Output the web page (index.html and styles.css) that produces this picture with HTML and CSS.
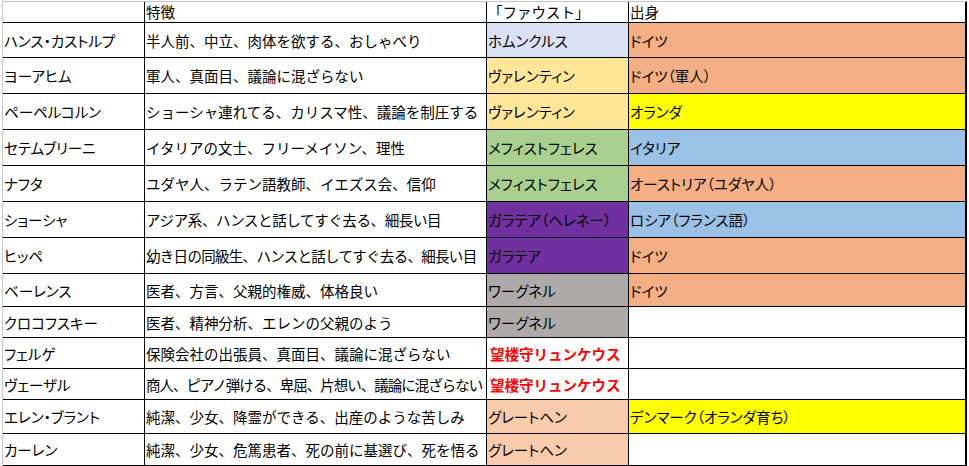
FILE: index.html
```html
<!DOCTYPE html>
<html lang="ja">
<head>
<meta charset="utf-8">
<title>魔の山とファウスト</title>
<link rel="stylesheet" href="styles.css">
</head>
<body>
<div class="sheet">
  <div class="c hdr"></div>
  <div class="c hdr">特徴</div>
  <div class="c hdr">「ファウスト」</div>
  <div class="c hdr">出身</div>

  <div class="c name">ハンス・カストルプ</div>
  <div class="c">半人前、中立、肉体を欲する、おしゃべり</div>
  <div class="c kana lav">ホムンクルス</div>
  <div class="c kana orange">ドイツ</div>

  <div class="c name">ヨーアヒム</div>
  <div class="c">軍人、真面目、議論に混ざらない</div>
  <div class="c kana gold">ヴァレンティン</div>
  <div class="c kana orange">ドイツ（軍人）</div>

  <div class="c name">ペーペルコルン</div>
  <div class="c">ショーシャ連れてる、カリスマ性、議論を制圧する</div>
  <div class="c kana gold">ヴァレンティン</div>
  <div class="c kana yellow">オランダ</div>

  <div class="c name">セテムブリーニ</div>
  <div class="c">イタリアの文士、フリーメイソン、理性</div>
  <div class="c kana green">メフィストフェレス</div>
  <div class="c kana blue">イタリア</div>

  <div class="c name">ナフタ</div>
  <div class="c">ユダヤ人、ラテン語教師、イエズス会、信仰</div>
  <div class="c kana green">メフィストフェレス</div>
  <div class="c kana orange">オーストリア（ユダヤ人）</div>

  <div class="c name">ショーシャ</div>
  <div class="c snug">アジア系、ハンスと話してすぐ去る、細長い目</div>
  <div class="c kana purple">ガラテア（ヘレネー）</div>
  <div class="c kana blue">ロシア（フランス語）</div>

  <div class="c name">ヒッペ</div>
  <div class="c tight">幼き日の同級生、ハンスと話してすぐ去る、細長い目</div>
  <div class="c kana purple">ガラテア</div>
  <div class="c kana orange">ドイツ</div>

  <div class="c name">ベーレンス</div>
  <div class="c">医者、方言、父親的権威、体格良い</div>
  <div class="c kana gray">ワーグネル</div>
  <div class="c kana orange">ドイツ</div>

  <div class="c name">クロコフスキー</div>
  <div class="c">医者、精神分析、エレンの父親のよう</div>
  <div class="c kana gray">ワーグネル</div>
  <div class="c"></div>

  <div class="c name">フェルゲ</div>
  <div class="c">保険会社の出張員、真面目、議論に混ざらない</div>
  <div class="c red">望楼守リュンケウス</div>
  <div class="c"></div>

  <div class="c name">ヴェーザル</div>
  <div class="c tighter">商人、ピアノ弾ける、卑屈、片想い、議論に混ざらない</div>
  <div class="c red">望楼守リュンケウス</div>
  <div class="c"></div>

  <div class="c name">エレン・ブラント</div>
  <div class="c">純潔、少女、降霊ができる、出産のような苦しみ</div>
  <div class="c kana peach">グレートヘン</div>
  <div class="c kana yellow">デンマーク（オランダ育ち）</div>

  <div class="c name">カーレン</div>
  <div class="c">純潔、少女、危篤患者、死の前に基選び、死を悟る</div>
  <div class="c kana peach">グレートヘン</div>
  <div class="c"></div>

  <div class="c"></div>
  <div class="c"></div>
  <div class="c"></div>
  <div class="c"></div>
</div>
</body>
</html>
```

FILE: styles.css
```css
html, body {
  margin: 0;
  padding: 0;
  overflow: hidden;
  background: #ffffff;
}

body {
  font-family: "Noto Sans CJK JP", "Noto Sans", sans-serif;
  font-size: 14.5px;
  color: #000000;
}

.sheet {
  margin: 1px 0 0 2px;
  width: 963px;
  display: grid;
  grid-template-columns: 141px 341px 141px 336px;
  grid-template-rows: 20px 34px 35px 35px 35px 35px 35px 35px 32px 30px 30px 30px 33px 31px 30px;
  gap: 1px;
  background: #000000;
  border-top: 1px solid #c6c6c6;
  border-left: 1px solid #c6c6c6;
  border-right: 1px solid #000000;
}

.c {
  background: #ffffff;
  display: flex;
  align-items: center;
  padding: 2px 0 0 1px;
  white-space: nowrap;
  overflow: hidden;
  line-height: 1;
}

.hdr {
  padding-top: 1px;
}

.name,
.kana {
  font-feature-settings: "palt";
}

.snug {
  letter-spacing: -0.38px;
}

.tight {
  letter-spacing: -0.7px;
}

.tighter {
  letter-spacing: -1px;
}

.lav { background: #d9e1f2; }
.gold { background: #ffe699; }
.orange { background: #f4b084; }
.yellow { background: #ffff00; }
.green { background: #a9d08e; }
.blue { background: #9bc2e6; }
.purple { background: #7030a0; }
.gray { background: #aeaaaa; }
.peach { background: #f8cbad; }

.red {
  color: #ff0000;
  font-weight: bold;
  padding-left: 3px;
}
```
